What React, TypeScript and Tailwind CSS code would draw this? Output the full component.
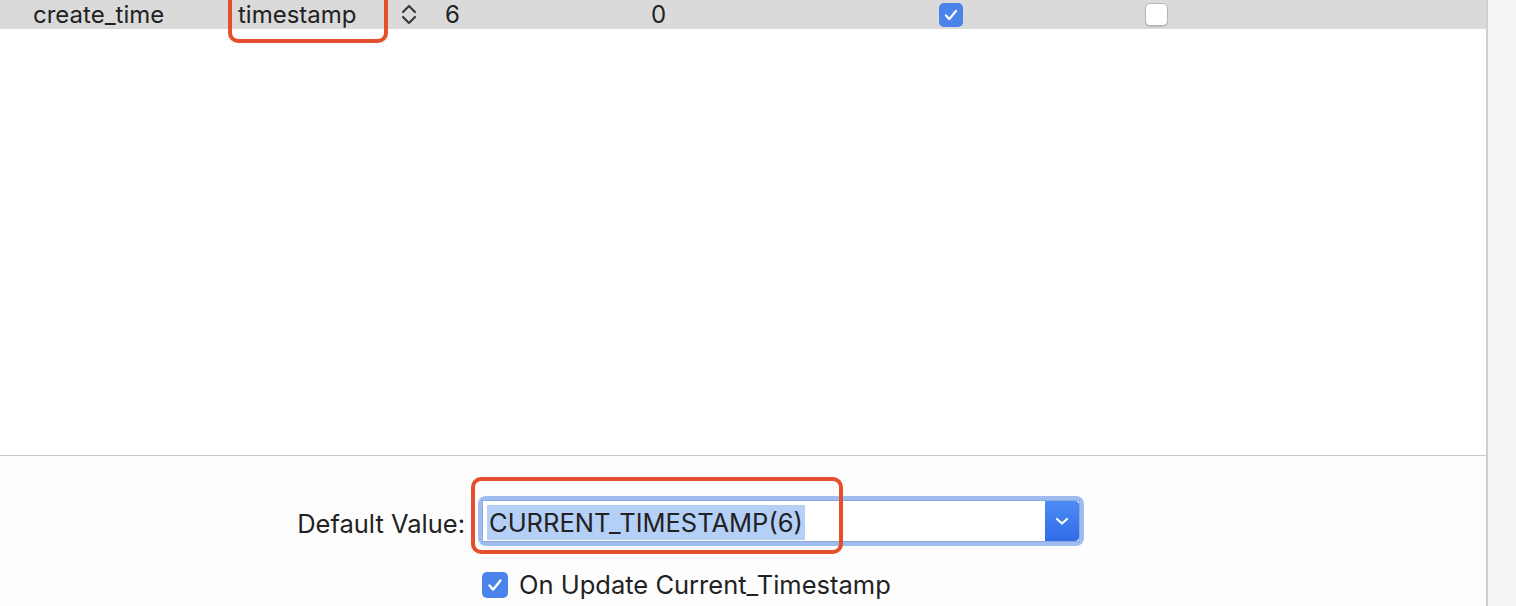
import React from "react";

const font = { fontFamily: "Inter, 'Noto Sans', sans-serif" };

const CheckMark = ({ className }: { className?: string }) => (
  <svg viewBox="0 0 24 24" className={className} fill="none">
    <path d="M6 12.5l4 4.5 8-10" stroke="white" strokeWidth="2.6" strokeLinecap="round" strokeLinejoin="round" />
  </svg>
);

const Stepper = () => (
  <svg width="18" height="25" viewBox="0 0 18 25" fill="none">
    <path d="M3 10l6-6 6 6" stroke="#3a3a3a" strokeWidth="2.2" strokeLinecap="round" strokeLinejoin="round" />
    <path d="M3 15l6 6 6-6" stroke="#3a3a3a" strokeWidth="2.2" strokeLinecap="round" strokeLinejoin="round" />
  </svg>
);

const App = () => {
  return (
    <div className="flex h-[606px] w-[1516px] overflow-hidden bg-white text-[#222]" style={font}>
      <div className="flex w-[1488px] flex-col border-r-2 border-[#cfcfcf]">
        {/* column row */}
        <div className="relative flex h-[29px] items-center bg-[#dadada] text-[24px] leading-[29px]">
          <div className="w-[238px] pl-[33px]">create_time</div>
          <div className="w-[162px]">timestamp</div>
          <div className="flex w-[45px] items-center">
            <Stepper />
          </div>
          <div className="w-[206px]">6</div>
          <div className="w-[288px]">0</div>
          <div className="w-[206px]">
            <div className="flex h-[24px] w-[24px] items-center justify-center rounded-[5px] bg-[#4a83ea]">
              <CheckMark className="h-[20px] w-[20px]" />
            </div>
          </div>
          <div>
            <div className="h-[23px] w-[23px] rounded-[5px] border border-[#b5b5b5] bg-white shadow-[0_1px_1px_rgba(0,0,0,0.15)]" />
          </div>
          <div className="absolute left-[228px] top-[-10px] h-[53px] w-[160px] rounded-[10px] border-4 border-[#e4502e]" />
        </div>
        <div className="h-px bg-white" />

        {/* empty area */}
        <div className="flex-1 bg-white" />

        {/* bottom panel */}
        <div className="h-[151px] border-t border-[#c8c8c8] bg-[#fdfdfd]">
          <div className="flex items-center pt-[40px]">
            <div className="w-[478px] pr-[13px] pt-[6px] text-right text-[25.5px]">Default Value:</div>
            <div className="relative">
              <div className="flex rounded-[8px] bg-[#9ebcf0] p-[4px]">
                <div className="flex h-[42px] w-[598px] border border-[#8ba8db] bg-white">
                  <div className="flex flex-1 items-center pl-[4px] pt-[2px]">
                    <span className="bg-[#b4d0f7] px-[2px] py-[2px] text-[25.5px] leading-[31px]">CURRENT_TIMESTAMP(6)</span>
                  </div>
                  <div className="flex w-[34px] items-center justify-center rounded-r-[4px] bg-gradient-to-b from-[#4d8cf5] to-[#2f6be8]">
                    <svg width="14" height="10" viewBox="0 0 14 10" fill="none">
                      <path d="M2 3l5 4.5L12 3" stroke="white" strokeWidth="2.2" strokeLinecap="round" strokeLinejoin="round" />
                    </svg>
                  </div>
                </div>
              </div>
              <div className="absolute left-[-7px] top-[-19px] h-[77px] w-[372px] rounded-[10px] border-4 border-[#e4502e]" />
            </div>
          </div>
          <div className="mt-[20px] flex items-center pl-[482px]">
            <div className="flex h-[26px] w-[26px] items-center justify-center rounded-[5px] bg-[#4a83ea]">
              <CheckMark className="h-[22px] w-[22px]" />
            </div>
            <span className="ml-[11px] text-[25.5px]">On Update Current_Timestamp</span>
          </div>
        </div>
      </div>
      <div className="flex-1 bg-[#f4f4f4]" />
    </div>
  );
};

export default App;
